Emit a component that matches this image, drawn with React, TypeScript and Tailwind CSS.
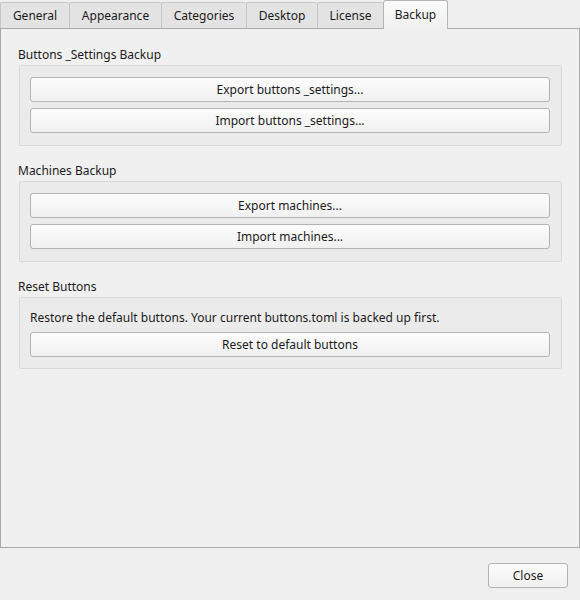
import React from "react";

const tabs = [
  { label: "General", w: "w-[69px]" },
  { label: "Appearance", w: "w-[92px]" },
  { label: "Categories", w: "w-[85px]" },
  { label: "Desktop", w: "w-[71px]" },
  { label: "License", w: "w-[66px]" },
];

function Btn({ children }: { children: React.ReactNode }) {
  return (
    <div className="h-[25px] flex items-center justify-center rounded-[3px] border border-[#b3b3b3] bg-gradient-to-b from-[#fcfcfc] to-[#f0f0f0] text-[12px] leading-none">
      {children}
    </div>
  );
}

function Title({ children }: { children: React.ReactNode }) {
  return <div className="h-[18px] leading-[20px] -ml-px">{children}</div>;
}

export default function App() {
  return (
    <div
      className="w-[580px] h-[600px] bg-[#efefef] flex flex-col text-[12px] text-[#1b1b1b] overflow-hidden"
      style={{ fontFamily: '"Noto Sans", "Open Sans", sans-serif' }}
    >
      {/* tab bar */}
      <div className="h-[28px] flex items-end relative z-10">
        {tabs.map((t) => (
          <div
            key={t.label}
            className={`${t.w} h-[26px] flex items-center justify-center border-t border-l border-[#c6c6c6] bg-[#e3e3e3] rounded-t-[2px]`}
          >
            <span>{t.label}</span>
          </div>
        ))}
        <div className="w-[65px] h-[29px] -mb-px flex items-center justify-center border-t border-l border-r border-[#b5b5b5] bg-gradient-to-b from-[#fbfbfb] to-[#f0f0f0] rounded-t-[3px]">
          <span className="-mt-px">Backup</span>
        </div>
      </div>

      {/* pane */}
      <div className="h-[520px] border border-[#a9a9a9] bg-[#f0f0f0] pl-[18px] pr-[17px] pt-[16px] flex flex-col">
        <Title>Buttons _Settings Backup</Title>
        <div className="mt-[2px] h-[81px] border border-[#d9d9d9] rounded-[2px] bg-[#ebebeb] pl-[10px] pr-[11px] pt-[11px] flex flex-col gap-[6px]">
          <Btn>Export buttons _settings...</Btn>
          <Btn>Import buttons _settings...</Btn>
        </div>

        <div className="mt-[15px]">
          <Title>Machines Backup</Title>
        </div>
        <div className="mt-[2px] h-[81px] border border-[#d9d9d9] rounded-[2px] bg-[#ebebeb] pl-[10px] pr-[11px] pt-[11px] flex flex-col gap-[6px]">
          <Btn>Export machines...</Btn>
          <Btn>Import machines...</Btn>
        </div>

        <div className="mt-[15px]">
          <Title>Reset Buttons</Title>
        </div>
        <div className="mt-[2px] h-[72px] border border-[#d9d9d9] rounded-[2px] bg-[#ebebeb] pl-[10px] pr-[11px] pt-[10px] flex flex-col gap-[6px]">
          <div className="h-[18px] leading-[20px]">
            Restore the default buttons. Your current buttons.toml is backed up first.
          </div>
          <Btn>Reset to default buttons</Btn>
        </div>
      </div>

      {/* footer */}
      <div className="flex justify-end pt-[15px] pr-[12px]">
        <div className="w-[80px]">
          <Btn>Close</Btn>
        </div>
      </div>
    </div>
  );
}
